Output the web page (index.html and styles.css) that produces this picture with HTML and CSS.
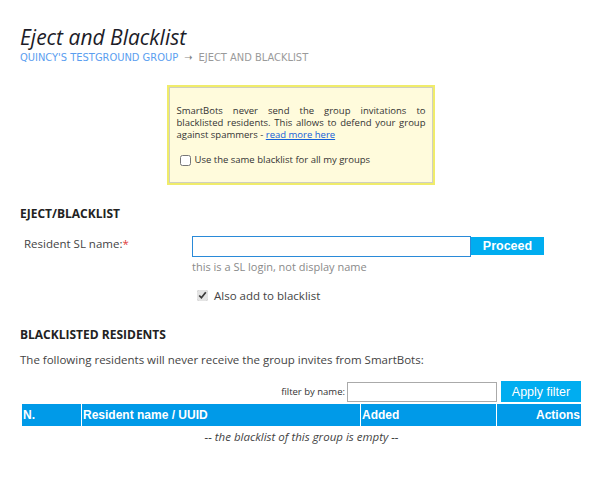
FILE: index.html
```html
<!DOCTYPE html>
<html lang="en">
<head>
    <meta charset="UTF-8">
    <title>Eject and Blacklist</title>
    <link rel="stylesheet" href="styles.css">
</head>
<body>
    <div class="page">
        <h1 class="title">Eject and Blacklist</h1>
        <div class="crumbs">
            <a href="#">QUINCY'S TESTGROUND GROUP</a>
            <span class="arrow">&#10141;</span>
            <span>EJECT AND BLACKLIST</span>
        </div>

        <!-- Aviso sobre la lista negra -->
        <div class="notice">
            <div class="notice-inner">
                <p>SmartBots never send the group invitations to blacklisted residents. This allows to defend your group against spammers - <a href="#">read more here</a></p>
                <label class="check"><input type="checkbox"> Use the same blacklist for all my groups</label>
            </div>
        </div>

        <h3 class="section">EJECT/BLACKLIST</h3>
        <form class="eject-form">
            <div class="field-label">Resident SL name:<span class="req">*</span></div>
            <div>
                <div class="field-row">
                    <input type="text" class="name-input">
                    <button type="button" class="btn">Proceed</button>
                </div>
                <div class="hint">this is a SL login, not display name</div>
                <label class="check also"><input type="checkbox" checked> Also add to blacklist</label>
            </div>
        </form>

        <h3 class="section second">BLACKLISTED RESIDENTS</h3>
        <p class="intro">The following residents will never receive the group invites from SmartBots:</p>

        <div class="filter">
            <span class="filter-label">filter by name:</span>
            <input type="text" class="filter-input">
            <button type="button" class="btn filter-btn">Apply filter</button>
        </div>

        <table class="list">
            <thead>
                <tr>
                    <th class="col-n">N.</th>
                    <th class="col-name">Resident name / UUID</th>
                    <th class="col-added">Added</th>
                    <th class="col-actions">Actions</th>
                </tr>
            </thead>
            <tbody>
                <tr>
                    <td colspan="4" class="empty">-- the blacklist of this group is empty --</td>
                </tr>
            </tbody>
        </table>
    </div>
</body>
</html>
```

FILE: styles.css
```css
body {
    margin: 0;
    background: #fff;
    font-family: "Open Sans", "DejaVu Sans", sans-serif;
    color: #3a3a3a;
}

.page {
    padding: 26px 19px 0 20px;
}

.title {
    margin: 0;
    font-size: 21px;
    font-style: italic;
    font-weight: normal;
    color: #1c1c28;
    line-height: 22px;
}

.crumbs {
    margin-top: 3px;
    font-family: "DejaVu Sans Condensed", "Liberation Sans Narrow", sans-serif;
    font-size: 11px;
    color: #9a9a9a;
    display: flex;
    gap: 6px;
}

.crumbs a {
    color: #5a9ef0;
    text-decoration: none;
}

.arrow {
    color: #888;
}

/* Caja amarilla */
.notice {
    width: 264px;
    margin: 21px auto 0;
    border: 2px solid #f0ec6a;
}

.notice-inner {
    border: 1px solid #cfcfc0;
    background: #fffbdc;
    padding: 17px 6px 16px 7px;
    font-size: 9.5px;
    line-height: 12px;
    color: #333;
}

.notice-inner p {
    margin: 0 0 13px;
    text-align: justify;
}

.notice-inner a {
    color: #1560d8;
}

.check {
    display: flex;
    align-items: center;
    gap: 4px;
}

.check input {
    margin: 0 0 0 3px;
    width: 11px;
    height: 11px;
    accent-color: #e4e4e4;
}

.section {
    margin: 20px 0 0;
    font-size: 12px;
    font-weight: bold;
    color: #222;
}

.section.second {
    margin-top: 23px;
}

.eject-form {
    display: grid;
    grid-template-columns: 172px 1fr;
    margin-top: 14px;
}

.field-label {
    padding-left: 4px;
    font-size: 11.5px;
    color: #444;
}

.req {
    color: #e04040;
}

.field-row {
    display: flex;
    align-items: flex-start;
}

.name-input {
    width: 275px;
    height: 17px;
    border: 1px solid #2a8ad8;
    margin: 0;
    padding: 1px;
}

.btn {
    background: #00adf0;
    color: #fff;
    border: none;
    font-family: "Liberation Sans", sans-serif;
    font-weight: bold;
    font-size: 12.5px;
    padding: 0;
    height: 18px;
    width: 73px;
    margin-top: 1px;
    cursor: pointer;
}

.hint {
    margin-top: 2px;
    font-size: 11px;
    color: #8a8a8a;
}

.check.also {
    margin-top: 14px;
    margin-left: 2px;
    font-size: 11.5px;
    color: #444;
    gap: 6px;
}

.intro {
    margin: 9px 0 0;
    font-size: 11.5px;
    color: #444;
}

.filter {
    display: flex;
    justify-content: flex-end;
    align-items: center;
    margin-top: 14px;
    gap: 2px;
}

.filter-label {
    font-size: 9.5px;
    color: #333;
}

.filter-input {
    width: 146px;
    height: 16px;
    margin: 0;
    border: 1px solid #aaa;
    padding: 1px;
}

.filter-btn {
    width: 80px;
    height: 21px;
    margin: 0 0 0 2px;
    font-size: 12.5px;
    font-weight: normal;
}

/* Tabla de residentes */
.list {
    width: 559px;
    margin-left: 2px;
    margin-top: 2px;
    border-collapse: collapse;
}

.list th {
    background: #009ae8;
    color: #fff;
    font-family: "Liberation Sans", sans-serif;
    font-size: 12px;
    text-align: left;
    height: 22px;
    padding: 0 1px;
    border-left: 1px solid #fff;
}

.list th.col-n {
    width: 57px;
    border-left: none;
}

.list th.col-name {
    width: 276px;
}

.list th.col-added {
    width: 133px;
}

.list th.col-actions {
    text-align: right;
}

.empty {
    text-align: center;
    font-style: italic;
    font-size: 11.5px;
    color: #444;
    padding: 3px 0;
}
```
